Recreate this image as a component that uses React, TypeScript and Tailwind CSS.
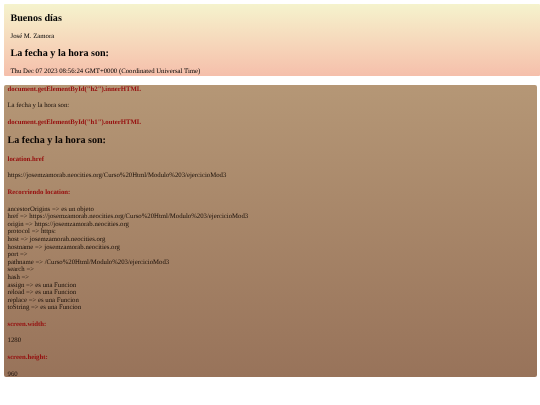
const serif = "font-['Liberation_Serif',serif]";

const locationLines = [
  "ancestorOrigins => es un objeto",
  "href => https://josemzamorab.neocities.org/Curso%20Html/Modulo%203/ejercicioMod3",
  "origin => https://josemzamorab.neocities.org",
  "protocol => https:",
  "host => josemzamorab.neocities.org",
  "hostname => josemzamorab.neocities.org",
  "port =>",
  "pathname => /Curso%20Html/Modulo%203/ejercicioMod3",
  "search =>",
  "hash =>",
  "assign => es una Funcion",
  "reload => es una Funcion",
  "replace => es una Funcion",
  "toString => es una Funcion",
];

function Label({ children }: { children: React.ReactNode }) {
  return <p className="mt-[9px] text-[6.75px] leading-[7.6px] font-bold text-[#960c0c]">{children}</p>;
}

function Line({ children }: { children: React.ReactNode }) {
  return <p className="mt-[9px] text-[6.75px] leading-[7.6px] text-[#1a0f08]">{children}</p>;
}

export default function App() {
  return (
    <div className={`h-[405px] w-[540px] overflow-hidden bg-white pt-[3.5px] blur-[0.35px] [text-rendering:geometricPrecision] ${serif}`}>
      <header className="ml-[4px] h-[72px] rounded-[1px] bg-gradient-to-b from-[#f5f3cd] to-[#f5bfab] pl-[6.5px] pt-[9px] text-black">
        <h2 className="text-[10.1px] leading-[12px] font-bold">Buenos días</h2>
        <p className="mt-[8px] text-[6.75px] leading-[7.6px]">José M. Zamora</p>
        <h2 className="mt-[8px] text-[10.1px] leading-[12px] font-bold">La fecha y la hora son:</h2>
        <p className="mt-[7.6px] text-[6.75px] leading-[7.6px]">Thu Dec 07 2023 08:56:24 GMT+0000 (Coordinated Universal Time)</p>
      </header>
      <main className="mt-[9.5px] ml-[3.5px] h-[292px] w-[533px] overflow-hidden rounded-[2px] bg-gradient-to-b from-[#b59776] to-[#98735a] pl-[4px] pt-[0.5px]">
        <p className="text-[6.75px] leading-[7.6px] font-bold text-[#960c0c]">document.getElementById("h2").innerHTML</p>
        <Line>La fecha y la hora son:</Line>
        <Label>document.getElementById("h1").outerHTML</Label>
        <h2 className="mt-[8.5px] text-[10.1px] leading-[12px] font-bold text-[#0a0503]">La fecha y la hora son:</h2>
        <Label>location.href</Label>
        <Line>https://josemzamorab.neocities.org/Curso%20Html/Modulo%203/ejercicioMod3</Line>
        <Label>Recorriendo location:</Label>
        <div className="mt-[9px] text-[6.75px] leading-[7.6px] text-[#1a0f08]">
          {locationLines.map((line) => (
            <p key={line}>{line}</p>
          ))}
        </div>
        <Label>screen.width:</Label>
        <Line>1280</Line>
        <Label>screen.height:</Label>
        <Line>960</Line>
      </main>
    </div>
  );
}
